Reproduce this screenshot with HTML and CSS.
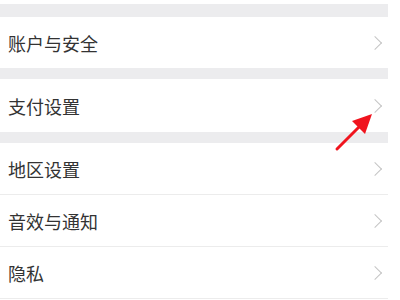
FILE: index.html
```html
<!DOCTYPE html>
<html lang="zh-CN">

<head>
     <meta charset="UTF-8">
     <meta name="viewport" content="width=device-width, initial-scale=1.0">
     <title>设置</title>
     <link rel="stylesheet" href="styles.css">
</head>

<body>
     <div id="settingsPage">
          <div class="gap gap-top"></div>
          <div class="group">
               <div class="item item-first">
                    <span class="label">账户与安全</span>
                    <span class="chevron"></span>
               </div>
          </div>
          <div class="gap"></div>
          <div class="group">
               <div class="item item-pay">
                    <span class="label">支付设置</span>
                    <span class="chevron"></span>
               </div>
          </div>
          <div class="gap"></div>
          <div class="group">
               <div class="item">
                    <span class="label">地区设置</span>
                    <span class="chevron"></span>
               </div>
               <div class="item">
                    <span class="label">音效与通知</span>
                    <span class="chevron"></span>
               </div>
               <div class="item">
                    <span class="label">隐私</span>
                    <span class="chevron"></span>
               </div>
          </div>

          <!-- 红色箭头标注 -->
          <svg class="pointer" width="50" height="50" viewBox="0 0 50 50">
               <line x1="5" y1="41" x2="29" y2="17" stroke="#f0141e" stroke-width="3" stroke-linecap="round" />
               <polygon points="40,6 20,13 33,26" fill="#f0141e" />
          </svg>
     </div>
</body>

</html>
```
FILE: styles.css
```css
body {
     margin: 0;
     background-color: #fff;
}

#settingsPage {
     position: relative;
     width: 388px;
     padding-top: 4px;
     font-family: "Noto Sans CJK SC", "Noto Sans", sans-serif;
}

#settingsPage .gap {
     height: 11px;
     background-color: #ececee;
}

#settingsPage .gap-top {
     height: 13px;
}

#settingsPage .item {
     display: flex;
     align-items: center;
     justify-content: space-between;
     height: 52px;
     padding: 0 4px 0 8px;
     border-bottom: 1px solid #ececec;
     box-sizing: border-box;
}

#settingsPage .item-first {
     height: 51px;
     border-bottom: none;
}

#settingsPage .item-pay {
     height: 53px;
     border-bottom: none;
}

#settingsPage .label {
     font-size: 18px;
     color: #333;
}

#settingsPage .chevron {
     width: 9px;
     height: 9px;
     margin-right: 4px;
     border-top: 1.5px solid #c4c4c4;
     border-right: 1.5px solid #c4c4c4;
     transform: rotate(45deg);
}

#settingsPage .pointer {
     position: absolute;
     left: 332px;
     top: 108px;
}
```
